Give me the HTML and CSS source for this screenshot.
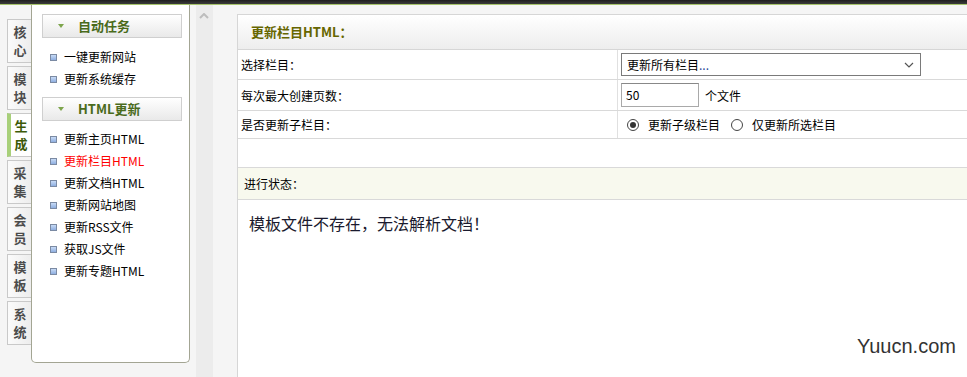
FILE: index.html
```html
<!DOCTYPE html>
<html lang="zh-CN">
<head>
  <meta charset="UTF-8" />
  <title>更新栏目HTML</title>
  <link rel="stylesheet" href="styles.css">
</head>
<body>

<div class="topbar"></div>

<div class="wrap">
  <div class="tabs">
    <div class="tab"><span>核</span><span>心</span></div>
    <div class="tab"><span>模</span><span>块</span></div>
    <div class="tab active"><span>生</span><span>成</span></div>
    <div class="tab"><span>采</span><span>集</span></div>
    <div class="tab"><span>会</span><span>员</span></div>
    <div class="tab"><span>模</span><span>板</span></div>
    <div class="tab"><span>系</span><span>统</span></div>
  </div>

  <div class="menu">
    <div class="menu-title"><span class="arrow"></span>自动任务</div>
    <ul class="menu-list first">
      <li>一键更新网站</li>
      <li>更新系统缓存</li>
    </ul>
    <div class="menu-title"><span class="arrow"></span>HTML更新</div>
    <ul class="menu-list">
      <li>更新主页HTML</li>
      <li class="current">更新栏目HTML</li>
      <li>更新文档HTML</li>
      <li>更新网站地图</li>
      <li>更新RSS文件</li>
      <li>获取JS文件</li>
      <li>更新专题HTML</li>
    </ul>
  </div>

  <div class="splitter">
    <div class="split-bar">
      <svg width="10" height="6" viewBox="0 0 10 6"><polyline points="1,5 5,1 9,5" fill="none" stroke="#bdbdbd" stroke-width="2"/></svg>
    </div>
  </div>

  <div class="main">
    <div class="main-head">更新栏目HTML：</div>
    <div class="row r1">
      <div class="cell label">选择栏目：</div>
      <div class="cell">
        <div class="select">
          <span>更新所有栏目<span class="dots">...</span></span>
          <svg width="10" height="6" viewBox="0 0 10 6"><polyline points="1,1 5,5 9,1" fill="none" stroke="#555" stroke-width="1.2"/></svg>
        </div>
      </div>
    </div>
    <div class="row r2">
      <div class="cell label">每次最大创建页数：</div>
      <div class="cell">
        <div class="input">50</div>
        <span class="unit">个文件</span>
      </div>
    </div>
    <div class="row r3">
      <div class="cell label">是否更新子栏目：</div>
      <div class="cell">
        <span class="radio checked"></span><span class="radio-text">更新子级栏目</span>
        <span class="radio"></span><span class="radio-text">仅更新所选栏目</span>
      </div>
    </div>
    <div class="row blank"></div>
    <div class="status">进行状态：</div>
    <div class="result">模板文件不存在，无法解析文档！</div>
  </div>
</div>

<div class="watermark">Yuucn.com</div>

</body>
</html>
```

FILE: styles.css
```css
* { box-sizing: border-box; }
body {
  margin: 0;
  background: #f5f5f5;
  font-family: "Noto Sans CJK SC", "DejaVu Sans", sans-serif;
  font-size: 12px;
  color: #000;
  height: 377px;
  overflow: hidden;
}
.topbar {
  height: 5px;
  background: linear-gradient(#1e1e1e, #3c3c3c);
  border-bottom: 1px solid #a6c36c;
}
.wrap {
  display: flex;
  height: 372px;
}

/* left tabs */
.tabs {
  margin-left: 7px;
  padding-top: 14px;
  width: 24px;
  display: flex;
  flex-direction: column;
  gap: 3px;
}
.tab {
  height: 44px;
  border: 1px solid #c9c9c9;
  border-right: none;
  background: linear-gradient(to right, #fbfbfb, #ededed);
  color: #4c4c4c;
  font-size: 13px;
  font-weight: bold;
  display: flex;
  flex-direction: column;
  align-items: center;
  padding-top: 3px;
  padding-left: 1px;
}
.tab span {
  height: 18px;
  line-height: 18px;
}
.tab.active {
  background: #fff;
  border-left: 4px solid #a8d07a;
  color: #3d5a08;
  padding-left: 0;
}

/* menu panel */
.menu {
  width: 159px;
  height: 358px;
  background: #fff;
  border: 1px solid #a3a593;
  border-top: none;
  border-radius: 0 0 5px 5px;
  padding: 9px 7px 0 10px;
}
.menu-title {
  height: 24px;
  border: 1px solid #cfcfcf;
  background: linear-gradient(#ffffff, #e9e9e9);
  color: #4a6b1c;
  font-size: 13px;
  font-weight: bold;
  line-height: 22px;
  padding-left: 15px;
  display: flex;
  align-items: center;
}
.arrow {
  width: 0;
  height: 0;
  border-left: 3px solid transparent;
  border-right: 3px solid transparent;
  border-top: 4px solid #7da54c;
  margin-right: 14px;
}
.menu-list {
  list-style: none;
  margin: 7px 0 7px 0;
  padding: 0 0 0 8px;
}
.menu-list.first {
  margin-top: 8px;
}
.menu-list li {
  height: 22px;
  line-height: 22px;
  display: flex;
  align-items: center;
}
.menu-list li::before {
  content: "";
  width: 5px;
  height: 5px;
  border: 1px solid #7b8aa3;
  background: linear-gradient(#c8dbf6, #8eaee0);
  margin-right: 7px;
}
.menu-list li.current {
  color: #ff0000;
}

/* splitter */
.splitter {
  width: 47px;
  padding-left: 6px;
}
.split-bar {
  width: 17px;
  height: 100%;
  background: #ececec;
  padding: 8px 0 0 3px;
}
.split-bar svg { display: block; }

/* main panel */
.main {
  flex: 1;
  margin-top: 9px;
  margin-right: -2px;
  background: #fff;
  border: 1px solid #d6d6d6;
  border-bottom: none;
}
.main-head {
  height: 35px;
  border-bottom: 1px solid #d6d6d6;
  background: linear-gradient(#ffffff, #ededed);
  color: #666600;
  font-size: 13px;
  font-weight: bold;
  line-height: 34px;
  padding-left: 13px;
}
.row {
  display: grid;
  grid-template-columns: 380px 1fr;
  border-bottom: 1px solid #d9d9d9;
}
.r1 { height: 30px; }
.r2 { height: 31px; }
.r3 { height: 28px; }
.blank { height: 29px; }
.cell {
  display: flex;
  align-items: center;
  padding-left: 3px;
}
.cell.label {
  border-right: 1px solid #e0e0e0;
}
.select {
  width: 300px;
  height: 23px;
  border: 1px solid #7a7a7a;
  display: flex;
  align-items: center;
  justify-content: space-between;
  padding: 0 6px 0 5px;
}
.dots { color: #2a4a9a; }
.input {
  width: 78px;
  height: 24px;
  border: 1px solid #a9a9a9;
  border-top-color: #888;
  line-height: 22px;
  padding-left: 4px;
}
.unit {
  margin-left: 6px;
}
.radio {
  width: 12px;
  height: 12px;
  border: 1px solid #444;
  border-radius: 50%;
  margin-left: 6px;
  margin-right: 9px;
  display: flex;
  align-items: center;
  justify-content: center;
}
.radio.checked::after {
  content: "";
  width: 6px;
  height: 6px;
  border-radius: 50%;
  background: #333;
}
.radio-text + .radio {
  margin-left: 11px;
}
.status {
  height: 32px;
  background: #f8f9ee;
  border-bottom: 1px solid #d9d9d9;
  line-height: 31px;
  padding-left: 6px;
}
.result {
  font-size: 16px;
  color: #1a1a2e;
  line-height: 20px;
  padding: 13px 0 0 11px;
}

.watermark {
  position: absolute;
  left: 857px;
  top: 335px;
  font-family: "Liberation Sans", Arial, sans-serif;
  font-size: 20px;
  color: #333;
}
```
